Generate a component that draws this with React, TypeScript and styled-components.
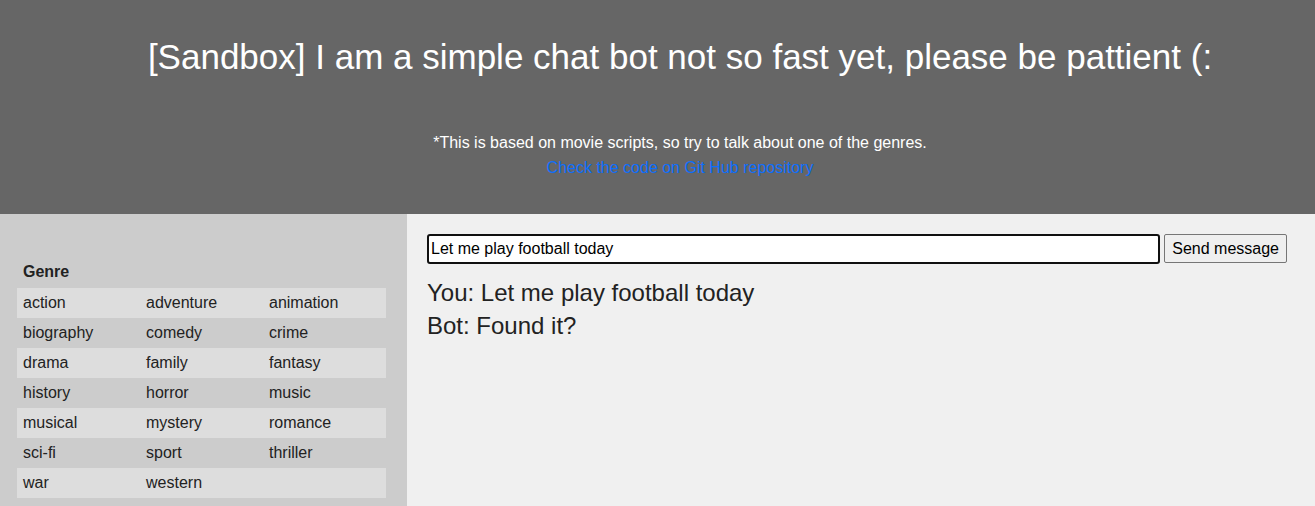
import React from "react";
import styled, { createGlobalStyle } from "styled-components";

const Global = createGlobalStyle`
  html, body { margin: 0; padding: 0; }
  body { font-family: "Liberation Sans", Arial, sans-serif; background: #f0f0f0; color: #212529; }
`;

const Page = styled.div`
  display: flex;
  flex-direction: column;
  min-height: 506px;
`;

const Header = styled.header`
  background: #666666;
  height: 214px;
  box-sizing: border-box;
  padding: 37px 0 0 45px;
  display: flex;
  flex-direction: column;
  align-items: center;
  color: #ffffff;
`;

const Title = styled.h1`
  margin: 0;
  font-size: 35px;
  font-weight: 400;
  line-height: 40px;
  white-space: nowrap;
`;

const Note = styled.p`
  margin: 53px 0 0;
  font-size: 16px;
  line-height: 25px;
`;

const RepoLink = styled.a`
  font-size: 16px;
  line-height: 25px;
  color: #0d6efd;
  text-decoration: none;
`;

const Main = styled.main`
  flex: 1;
  display: flex;
`;

const Sidebar = styled.aside`
  width: 407px;
  background: #cccccc;
  box-sizing: border-box;
  padding: 49px 21px 8px 17px;
`;

const Table = styled.table`
  width: 369px;
  border-collapse: collapse;
  table-layout: fixed;
  font-size: 16px;
  color: #222;
`;

const HeadCell = styled.th`
  text-align: left;
  font-weight: 700;
  padding: 0 6px;
  height: 25px;
  vertical-align: top;
  line-height: 18px;
`;

const Row = styled.tr<{ $shade: boolean }>`
  background: ${(p) => (p.$shade ? "#dddddd" : "#cccccc")};
`;

const Cell = styled.td`
  height: 30px;
  padding: 0 6px;
  box-sizing: border-box;
`;

const Chat = styled.section`
  flex: 1;
  background: #f0f0f0;
  padding: 20px 28px 0 20px;
`;

const Form = styled.form`
  display: flex;
  gap: 4px;
  align-items: flex-start;
`;

const Input = styled.input`
  flex: 1;
  height: 30px;
  box-sizing: border-box;
  border: 2px solid #101010;
  border-radius: 3px;
  padding: 0 2px;
  font-family: "Liberation Sans", Arial, sans-serif;
  font-size: 16px;
  color: #000;
  background: #fff;
  outline: none;
`;

const SendButton = styled.button`
  height: 29px;
  box-sizing: border-box;
  padding: 0 7px;
  border: 1px solid #767676;
  border-radius: 2px;
  background: #efefef;
  font-family: "Liberation Sans", Arial, sans-serif;
  font-size: 16px;
  color: #000;
`;

const Messages = styled.div`
  margin-top: 12px;
  font-size: 24px;
  line-height: 33px;
  color: #222;
`;

const genres = [
  ["action", "adventure", "animation"],
  ["biography", "comedy", "crime"],
  ["drama", "family", "fantasy"],
  ["history", "horror", "music"],
  ["musical", "mystery", "romance"],
  ["sci-fi", "sport", "thriller"],
  ["war", "western", ""],
];

export default function App() {
  return (
    <Page>
      <Global />
      <Header>
        <Title>[Sandbox] I am a simple chat bot not so fast yet, please be pattient (:</Title>
        <Note>*This is based on movie scripts, so try to talk about one of the genres.</Note>
        <RepoLink href="#">Check the code on Git Hub repository</RepoLink>
      </Header>
      <Main>
        <Sidebar>
          <Table>
            <thead>
              <tr>
                <HeadCell>Genre</HeadCell>
                <HeadCell />
                <HeadCell />
              </tr>
            </thead>
            <tbody>
              {genres.map((r, i) => (
                <Row key={i} $shade={i % 2 === 0}>
                  {r.map((g, j) => (
                    <Cell key={j}>{g}</Cell>
                  ))}
                </Row>
              ))}
            </tbody>
          </Table>
        </Sidebar>
        <Chat>
          <Form onSubmit={(e) => e.preventDefault()}>
            <Input defaultValue="Let me play football today" />
            <SendButton type="submit">Send message</SendButton>
          </Form>
          <Messages>
            <div>You: Let me play football today</div>
            <div>Bot: Found it?</div>
          </Messages>
        </Chat>
      </Main>
    </Page>
  );
}
